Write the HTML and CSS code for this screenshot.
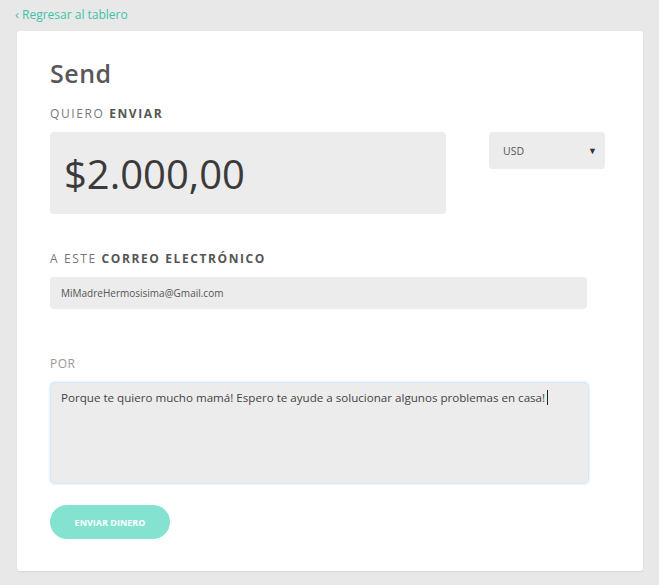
FILE: index.html
```html
<!DOCTYPE html>
<html lang="es">
<head>
  <meta charset="UTF-8" />
  <title>Send</title>
  <link rel="stylesheet" href="styles.css">
</head>
<body>
  <a class="back-link" href="#"><span class="chev">&lsaquo;</span> Regresar al tablero</a>

  <main class="card">
    <h1>Send</h1>

    <section>
      <label class="field-label">QUIERO <b>ENVIAR</b></label>
      <div class="amount-row">
        <div class="amount-box">$2.000,00</div>
        <div class="currency-select">
          <span>USD</span>
          <span class="arrow">&#9660;</span>
        </div>
      </div>
    </section>

    <section class="email-section">
      <label class="field-label">A ESTE <b>CORREO ELECTRÓNICO</b></label>
      <div class="text-field">MiMadreHermosisima@Gmail.com</div>
    </section>

    <section class="reason-section">
      <label class="field-label light">POR</label>
      <div class="text-area">Porque te quiero mucho mamá! Espero te ayude a solucionar algunos problemas en casa!<span class="caret"></span></div>
    </section>

    <button class="send-btn">ENVIAR DINERO</button>
  </main>
</body>
</html>
```

FILE: styles.css
```css
:root {
  --bg: #e8e8e8;
  --field: #ececec;
  --teal: #3fc3a6;
  --teal-light: #84e3d0;
  --text: #555;
}

* {
  box-sizing: border-box;
}

body, html {
  margin: 0;
  font-family: 'Open Sans', 'Noto Sans', sans-serif;
  background-color: var(--bg);
  color: var(--text);
}

body {
  padding: 7px 16px 14px 15px;
}

.back-link {
  display: block;
  color: var(--teal);
  font-size: 12px;
  line-height: 14px;
  text-decoration: none;
  margin-bottom: 9px;
}

.back-link .chev {
  font-size: 13px;
}

.card {
  margin-left: 2px;
  width: 626px;
  height: 540px;
  background: #fff;
  border-radius: 3px;
  box-shadow: 0 1px 2px rgba(0,0,0,0.08);
  padding: 28px 33px 0;
}

h1 {
  margin: 0 0 19px;
  font-size: 25px;
  line-height: 28px;
  font-weight: 600;
  color: #585858;
  letter-spacing: 0.5px;
}

section {
  margin: 0;
}

.field-label {
  display: block;
  font-size: 12px;
  line-height: 15px;
  letter-spacing: 1.6px;
  color: #777;
  margin-bottom: 11px;
}

.field-label b {
  color: #555;
  font-weight: 700;
}

.field-label.light {
  color: #999;
  letter-spacing: 0.5px;
}

.amount-row {
  display: flex;
  gap: 43px;
  align-items: flex-start;
}

.amount-box {
  width: 396px;
  height: 82px;
  background: var(--field);
  border-radius: 4px;
  padding-left: 14px;
  display: flex;
  align-items: center;
  font-size: 40px;
  color: #3a3a3a;
}

.currency-select {
  width: 116px;
  height: 37px;
  background: var(--field);
  border-radius: 4px;
  padding: 0 8px 0 14px;
  display: flex;
  align-items: center;
  justify-content: space-between;
  font-size: 10.5px;
  color: #555;
}

.currency-select .arrow {
  font-size: 9px;
  color: #333;
}

.email-section {
  margin-top: 37px;
}

.text-field {
  width: 537px;
  height: 32px;
  background: var(--field);
  border-radius: 4px;
  padding-left: 11px;
  display: flex;
  align-items: center;
  font-size: 10px;
  color: #555;
}

.reason-section {
  margin-top: 47px;
}

.text-area {
  width: 539px;
  height: 102px;
  background: var(--field);
  border: 1px solid #d4e8f8;
  border-radius: 5px;
  box-shadow: 0 0 3px #cfe6f7;
  padding: 7px 10px;
  font-size: 11.6px;
  line-height: 16px;
  color: #444;
}

.caret {
  display: inline-block;
  width: 1px;
  height: 15px;
  background: #222;
  vertical-align: -3px;
  margin-left: 2px;
}

.send-btn {
  display: block;
  margin-top: 21px;
  width: 120px;
  height: 34px;
  border: none;
  border-radius: 17px;
  background: var(--teal-light);
  color: #fff;
  font-family: inherit;
  font-size: 9px;
  font-weight: 700;
  cursor: pointer;
}
```
